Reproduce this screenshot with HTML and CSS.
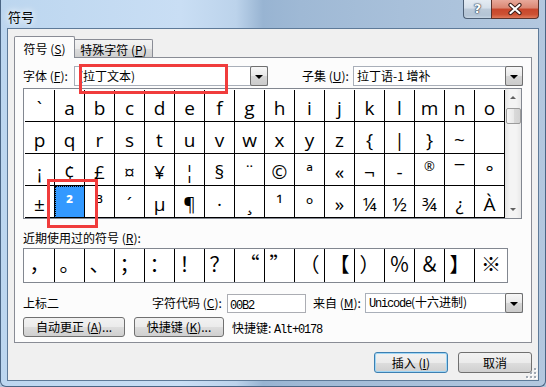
FILE: index.html
```html
<!DOCTYPE html>
<html lang="zh-CN">
<head>
    <meta charset="UTF-8">
    <title>符号</title>
    <link rel="stylesheet" href="styles.css">
</head>
<body>
    <div class="window">
        <div class="titlebar">
            <span class="title">符号</span>
            <div class="caption-btns">
                <div class="cap-btn help">?</div>
                <div class="cap-btn close">
                    <svg width="46" height="18" viewBox="0 0 46 18">
                        <path d="M18.5 5 L27.5 13 M27.5 5 L18.5 13" stroke="#3b1d18" stroke-width="4.2" stroke-linecap="round"/>
                        <path d="M18.5 5 L27.5 13 M27.5 5 L18.5 13" stroke="#fff" stroke-width="2.2" stroke-linecap="round"/>
                    </svg>
                </div>
            </div>
        </div>

        <div class="client">
            <div class="tabs">
                <div class="tab active">符号 (<u>S</u>)</div>
                <div class="tab">特殊字符 (<u>P</u>)</div>
            </div>

            <div class="tabpage">
                <div class="font-row">
                    <span class="font-lbl">字体 (<u>F</u>):</span>
                    <div class="combo font-combo">
                        <span class="combo-text">(拉丁文本)</span>
                        <span class="drop"></span>
                    </div>
                    <span class="subset-lbl">子集 (<u>U</u>):</span>
                    <div class="combo subset-combo">
                        <span class="combo-text">拉丁语-1 增补</span>
                        <span class="drop"></span>
                    </div>
                </div>

                <div class="charmap">
                    <div class="cells">
                        <div class="cell">`</div><div class="cell">a</div><div class="cell">b</div><div class="cell">c</div>
                        <div class="cell">d</div><div class="cell">e</div><div class="cell">f</div><div class="cell">g</div>
                        <div class="cell">h</div><div class="cell">i</div><div class="cell">j</div><div class="cell">k</div>
                        <div class="cell">l</div><div class="cell">m</div><div class="cell">n</div><div class="cell">o</div>

                        <div class="cell">p</div><div class="cell">q</div><div class="cell">r</div><div class="cell">s</div>
                        <div class="cell">t</div><div class="cell">u</div><div class="cell">v</div><div class="cell">w</div>
                        <div class="cell">x</div><div class="cell">y</div><div class="cell">z</div><div class="cell">{</div>
                        <div class="cell">|</div><div class="cell">}</div><div class="cell">~</div><div class="cell"></div>

                        <div class="cell">¡</div><div class="cell">¢</div><div class="cell">£</div><div class="cell">¤</div>
                        <div class="cell">¥</div><div class="cell">¦</div><div class="cell">§</div><div class="cell">¨</div>
                        <div class="cell">©</div><div class="cell">ª</div><div class="cell">«</div><div class="cell">¬</div>
                        <div class="cell">-</div><div class="cell small">®</div><div class="cell">¯</div><div class="cell">°</div>

                        <div class="cell">±</div><div class="cell sel">²</div><div class="cell">³</div><div class="cell">´</div>
                        <div class="cell">µ</div><div class="cell">¶</div><div class="cell">·</div><div class="cell">¸</div>
                        <div class="cell">¹</div><div class="cell">º</div><div class="cell">»</div><div class="cell">¼</div>
                        <div class="cell">½</div><div class="cell">¾</div><div class="cell">¿</div><div class="cell">À</div>
                    </div>
                    <div class="vscroll">
                        <div class="sb-arrow"><span class="tri-up"></span></div>
                        <div class="sb-thumb"></div>
                        <div class="sb-track"></div>
                        <div class="sb-arrow"><span class="tri-down"></span></div>
                    </div>
                </div>

                <div class="recent-lbl">近期使用过的符号 (<u>R</u>):</div>
                <div class="recent">
                    <div class="rcell">，</div><div class="rcell">。</div><div class="rcell">、</div><div class="rcell">；</div>
                    <div class="rcell">：</div><div class="rcell">！</div><div class="rcell">？</div><div class="rcell">“</div>
                    <div class="rcell">”</div><div class="rcell">（</div><div class="rcell">【</div><div class="rcell">）</div>
                    <div class="rcell">％</div><div class="rcell">＆</div><div class="rcell">】</div><div class="rcell">※</div>
                </div>

                <div class="info-row">
                    <span class="char-name">上标二</span>
                    <span class="code-lbl">字符代码 (<u>C</u>):</span>
                    <div class="code-input"><span class="mono">00B2</span></div>
                    <span class="from-lbl">来自 (<u>M</u>):</span>
                    <div class="combo from-combo">
                        <span class="combo-text"><span class="mono">Unicode</span>(十六进制)</span>
                        <span class="drop"></span>
                    </div>
                </div>

                <div class="btn-row">
                    <div class="btn autocorrect">自动更正 (<u>A</u>)...</div>
                    <div class="btn shortcut">快捷键 (<u>K</u>)...</div>
                    <span class="shortcut-text">快捷键: <span class="mono">Alt+0178</span></span>
                </div>
            </div>

            <div class="dialog-btns">
                <div class="btn default">插入 (<u>I</u>)</div>
                <div class="btn">取消</div>
            </div>

            <svg class="grip" width="11" height="11" viewBox="0 0 11 11">
                <g fill="#fff">
                    <rect x="9" y="1" width="2" height="2"/><rect x="9" y="5" width="2" height="2"/><rect x="5" y="5" width="2" height="2"/>
                    <rect x="9" y="9" width="2" height="2"/><rect x="5" y="9" width="2" height="2"/><rect x="1" y="9" width="2" height="2"/>
                </g>
                <g fill="#a0a8b2">
                    <rect x="8" y="0" width="2" height="2"/><rect x="8" y="4" width="2" height="2"/><rect x="4" y="4" width="2" height="2"/>
                    <rect x="8" y="8" width="2" height="2"/><rect x="4" y="8" width="2" height="2"/><rect x="0" y="8" width="2" height="2"/>
                </g>
            </svg>
        </div>

        <!-- annotation boxes drawn over the dialog -->
        <div class="mark mark-font"></div>
        <div class="mark mark-cell"></div>
    </div>
</body>
</html>
```

FILE: styles.css
```css
* {
    box-sizing: border-box;
}
body {
    margin: 0;
    font-family: "Noto Sans CJK SC", "Noto Sans", sans-serif;
    font-size: 12px;
    line-height: 14px;
    color: #000;
    background: #b1c7de;
}
u {
    text-underline-offset: 1px;
}
.window {
    position: relative;
    width: 546px;
    height: 387px;
    display: flex;
    flex-direction: column;
    border: 1px solid #4a6584;
    border-top: none;
    border-radius: 0 0 6px 6px;
    background: linear-gradient(90deg, #bcd6ef 0, #c9def4 180px, #bcd3eb 235px, #98b4d2 262px, #9fb9d5 300px, #a8c0da 400px, #b3c8df 546px);
}
.titlebar {
    height: 28px;
    display: flex;
    align-items: flex-start;
    padding-left: 7px;
}
.title {
    margin-top: 9px;
    font-size: 13px;
    line-height: 15px;
    text-shadow: 0 0 6px #fff, 0 0 10px #fff;
}
.caption-btns {
    margin-left: auto;
    margin-right: 6px;
    display: flex;
}
.cap-btn {
    height: 19px;
    border: 1px solid #4d5f75;
    border-top: none;
}
.help {
    width: 28px;
    border-right: none;
    border-radius: 0 0 0 4px;
    background: linear-gradient(#e4ebf3, #d5dfea 45%, #bccad9 50%, #b4c4d5 85%, #c6d4e2);
    color: #fff;
    font-family: "DejaVu Sans", sans-serif;
    font-weight: bold;
    font-size: 13px;
    line-height: 18px;
    text-align: center;
    text-shadow: 0 0 1px #2c3c50, 0 0 1px #2c3c50, 0 0 2px #2c3c50;
}
.close {
    width: 48px;
    border-color: #5a332c;
    border-radius: 0 0 4px 0;
    background: linear-gradient(#e8a99b, #da8672 45%, #c8462c 50%, #cc5133 80%, #e07a5c);
}
.close svg {
    display: block;
}

.client {
    position: relative;
    flex: 1;
    margin: 0 6px 5px 6px;
    border: 1px solid #5e7a98;
    background: #f0f0f0;
    padding: 7px 6px 0 6px;
}
.tabs {
    display: flex;
    align-items: flex-end;
    height: 21px;
}
.tab {
    height: 18px;
    width: 78px;
    padding-top: 3px;
    text-align: center;
    white-space: nowrap;
    border: 1px solid #898c95;
    border-bottom: none;
    border-left: none;
    border-radius: 0 2px 0 0;
    background: linear-gradient(#f3f3f3, #ebebeb 50%, #dddddd 51%, #cfcfcf);
}
.tab.active {
    position: relative;
    z-index: 1;
    width: 61px;
    height: 22px;
    margin-bottom: -1px;
    padding-top: 5px;
    border-left: 1px solid #898c95;
    border-radius: 2px 2px 0 0;
    background: #fcfcfc;
}
.tabpage {
    border: 1px solid #898c95;
    background: #fcfcfc;
    padding: 8px 0 5px 8px;
}

.font-row, .info-row {
    display: flex;
    align-items: center;
    height: 20px;
}
.font-lbl {
    width: 51px;
    white-space: nowrap;
}
.subset-lbl {
    width: 51px;
    margin-left: 34px;
    white-space: nowrap;
}
.combo {
    display: flex;
    align-items: center;
    height: 20px;
    border: 1px solid #a9afb9;
    background: #fff;
}
.combo-text {
    padding-left: 3px;
    white-space: nowrap;
}
.font-combo {
    width: 194px;
}
.font-combo .combo-text {
    padding-left: 4px;
}
.subset-combo {
    width: 170px;
}
.drop {
    margin: -1px -1px -1px auto;
    width: 18px;
    height: 20px;
    border: 1px solid #6f6f6f;
    border-radius: 2px;
    background: linear-gradient(#f7f7f7, #e8e8e8 50%, #d6d6d6 51%, #cbcbcb);
    display: flex;
    align-items: center;
    justify-content: center;
}
.drop::after {
    content: "";
    border-left: 4px solid transparent;
    border-right: 4px solid transparent;
    border-top: 4px solid #000;
    margin-top: 1px;
}

.charmap {
    display: flex;
    width: 499px;
    height: 131px;
    margin-top: 2px;
    border: 1px solid #828790;
    background: #fff;
}
.cells {
    display: grid;
    grid-template-columns: repeat(16, 30px);
    grid-auto-rows: 32px;
    padding: 1px 0 0 1px;
}
.cell {
    border-right: 1px solid #000;
    border-bottom: 1px solid #000;
    padding-top: 6px;
    text-align: center;
    font-family: "Open Sans", "Noto Sans", sans-serif;
    font-size: 19px;
    line-height: 25px;
}
.cell.small {
    font-size: 13px;
    line-height: 14px;
    padding-top: 5px;
}
.cell.sel {
    background: #3399ff;
    color: #fff;
    font-weight: bold;
    outline: 1px dotted #000;
    outline-offset: -1px;
}
.vscroll {
    width: 16px;
    display: flex;
    flex-direction: column;
    align-items: center;
    background: linear-gradient(90deg, #e4e4e4, #f4f4f4 30%, #f4f4f4 70%, #e8e8e8);
}
.sb-arrow {
    height: 17px;
    width: 16px;
    display: flex;
    align-items: center;
    justify-content: center;
}
.tri-up {
    border-left: 3px solid transparent;
    border-right: 3px solid transparent;
    border-bottom: 3px solid #606060;
}
.tri-down {
    border-left: 3px solid transparent;
    border-right: 3px solid transparent;
    border-top: 3px solid #606060;
}
.sb-thumb {
    width: 15px;
    height: 16px;
    margin-top: 2px;
    border: 1px solid #9b9b9b;
    border-radius: 2px;
    background: linear-gradient(90deg, #f6f6f6, #e9e9e9 50%, #dadada 51%, #d2d2d2);
}
.sb-track {
    flex: 1;
}

.recent-lbl {
    margin-top: 12px;
}
.recent {
    display: flex;
    width: 485px;
    height: 35px;
    margin-top: 3px;
    padding-left: 1px;
    border: 1px solid #828790;
    background: #fff;
}
.rcell {
    width: 30px;
    border-right: 1px solid #000;
    padding-top: 5px;
    text-align: center;
    font-size: 20px;
    line-height: 20px;
}
.rcell:last-child {
    width: 32px;
    border-right: none;
}

.info-row {
    margin-top: 10px;
}
.char-name {
    width: 129px;
}
.code-lbl {
    width: 75px;
    white-space: nowrap;
}
.code-input {
    width: 79px;
    height: 19px;
    padding-left: 2px;
    border: 1px solid #abadb3;
    background: #fff;
    line-height: 17px;
}
.from-lbl {
    width: 52px;
    margin-left: 7px;
    white-space: nowrap;
}
.from-combo {
    width: 158px;
}
.mono {
    font-family: "Liberation Mono", monospace;
    font-size: 12px;
    letter-spacing: -1.2px;
}

.btn-row {
    display: flex;
    align-items: center;
    margin-top: 4px;
}
.btn {
    height: 20px;
    border: 1px solid #707070;
    border-radius: 3px;
    background: linear-gradient(#f2f2f2, #ebebeb 50%, #dddddd 51%, #cfcfcf);
    text-align: center;
    line-height: 18px;
    white-space: nowrap;
}
.autocorrect {
    width: 102px;
}
.shortcut {
    width: 90px;
    margin-left: 9px;
}
.shortcut-text {
    margin-left: 8px;
    padding-top: 3px;
}

.dialog-btns {
    display: flex;
    justify-content: flex-end;
    gap: 10px;
    margin-top: 9px;
}
.dialog-btns .btn {
    width: 74px;
    height: 21px;
    line-height: 19px;
}
.btn.default {
    border-color: #3c7fb1;
    box-shadow: inset 0 0 0 1px #9fd6f5;
}
.grip {
    position: absolute;
    right: 1px;
    bottom: 1px;
}

.mark {
    position: absolute;
    border: 3px solid #f03c3c;
}
.mark-font {
    left: 78px;
    top: 64px;
    width: 149px;
    height: 30px;
}
.mark-cell {
    left: 46px;
    top: 179px;
    width: 51px;
    height: 49px;
}
```
